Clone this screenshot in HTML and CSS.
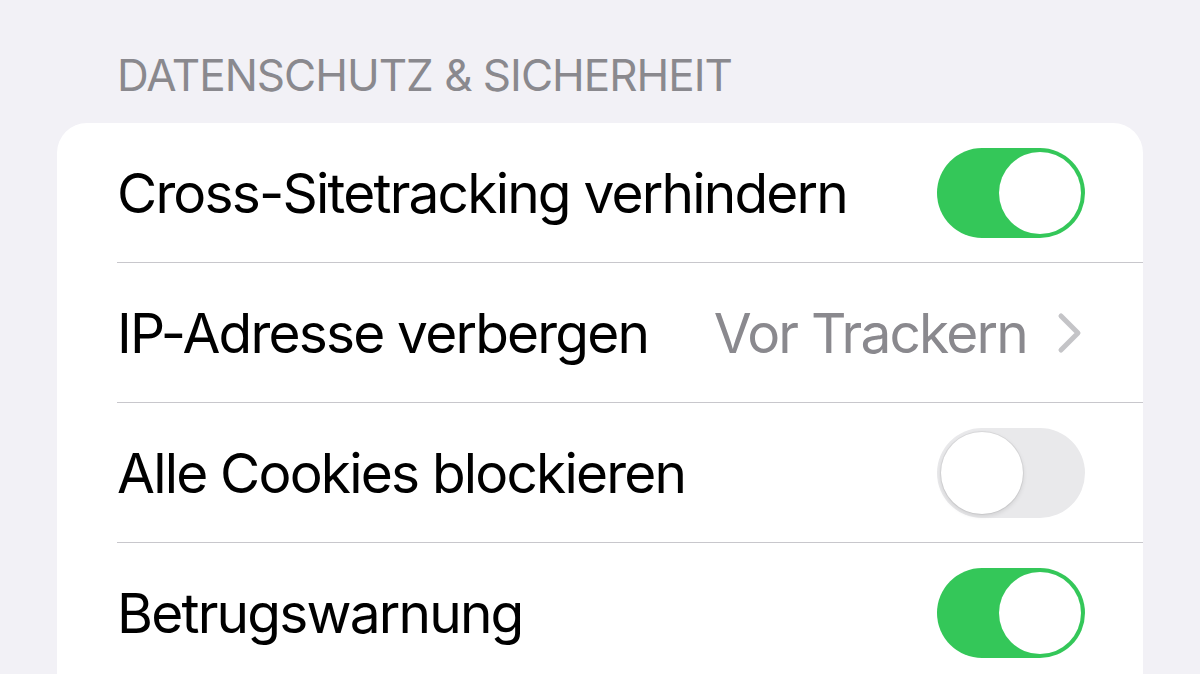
FILE: index.html
```html
<!DOCTYPE html>
<html lang="de">
<head>
<meta charset="utf-8">
<link rel="stylesheet" href="styles.css">
</head>
<body>
<div class="page">
  <div class="section-title">DATENSCHUTZ &amp; SICHERHEIT</div>
  <div class="card">
    <div class="row">
      <div class="row-inner">
        <span class="label">Cross-Sitetracking verhindern</span>
        <span class="toggle on"><span class="thumb"></span></span>
      </div>
    </div>
    <div class="row">
      <div class="row-inner">
        <span class="label">IP-Adresse verbergen</span>
        <span class="detail">
          <span class="value">Vor Trackern</span>
          <svg class="chevron" width="26" height="42" viewBox="0 0 26 42"><path d="M4 4 L21 21 L4 38" fill="none" stroke="#c4c4c7" stroke-width="5" stroke-linecap="round" stroke-linejoin="round"/></svg>
        </span>
      </div>
    </div>
    <div class="row">
      <div class="row-inner">
        <span class="label">Alle Cookies blockieren</span>
        <span class="toggle off"><span class="thumb"></span></span>
      </div>
    </div>
    <div class="row">
      <div class="row-inner last">
        <span class="label">Betrugswarnung</span>
        <span class="toggle on"><span class="thumb"></span></span>
      </div>
    </div>
  </div>
</div>
</body>
</html>
```

FILE: styles.css
```css
html, body {
  margin: 0;
  padding: 0;
  background: #f2f1f6;
  font-family: Inter, "Noto Sans", sans-serif;
  overflow: hidden;
}
.page {
  padding: 49px 57px 0 57px;
  width: 1086px;
}
.section-title {
  padding-left: 60px;
  font-size: 44px;
  line-height: 52px;
  color: #8a898e;
  letter-spacing: -1px;
  margin-bottom: 22px;
}
.card {
  background: #ffffff;
  border-radius: 30px;
  overflow: hidden;
  padding-bottom: 60px;
}
.row {
  padding-left: 60px;
}
.row-inner {
  height: 139px;
  display: flex;
  align-items: center;
  justify-content: space-between;
  padding-right: 58px;
  border-bottom: 1px solid #c8c7cc;
}
.row-inner.last {
  border-bottom: none;
}
.label {
  font-size: 55px;
  color: #000;
  letter-spacing: -1.8px;
}
.detail {
  display: flex;
  align-items: center;
  gap: 30px;
}
.value {
  font-size: 55px;
  color: #8a898e;
  letter-spacing: -1.8px;
}
.chevron {
  display: block;
  margin-right: 2px;
}
.toggle {
  width: 148px;
  height: 90px;
  border-radius: 45px;
  box-sizing: border-box;
  display: flex;
  align-items: center;
  padding: 0 4px;
}
.toggle.on {
  background: #34c759;
  justify-content: flex-end;
}
.toggle.off {
  background: #e9e9eb;
  justify-content: flex-start;
}
.thumb {
  width: 82px;
  height: 82px;
  border-radius: 50%;
  background: #fff;
}
.toggle.off .thumb {
  box-shadow: 0 2px 5px rgba(0,0,0,0.12), 0 0 0 1px rgba(0,0,0,0.06);
}
```
